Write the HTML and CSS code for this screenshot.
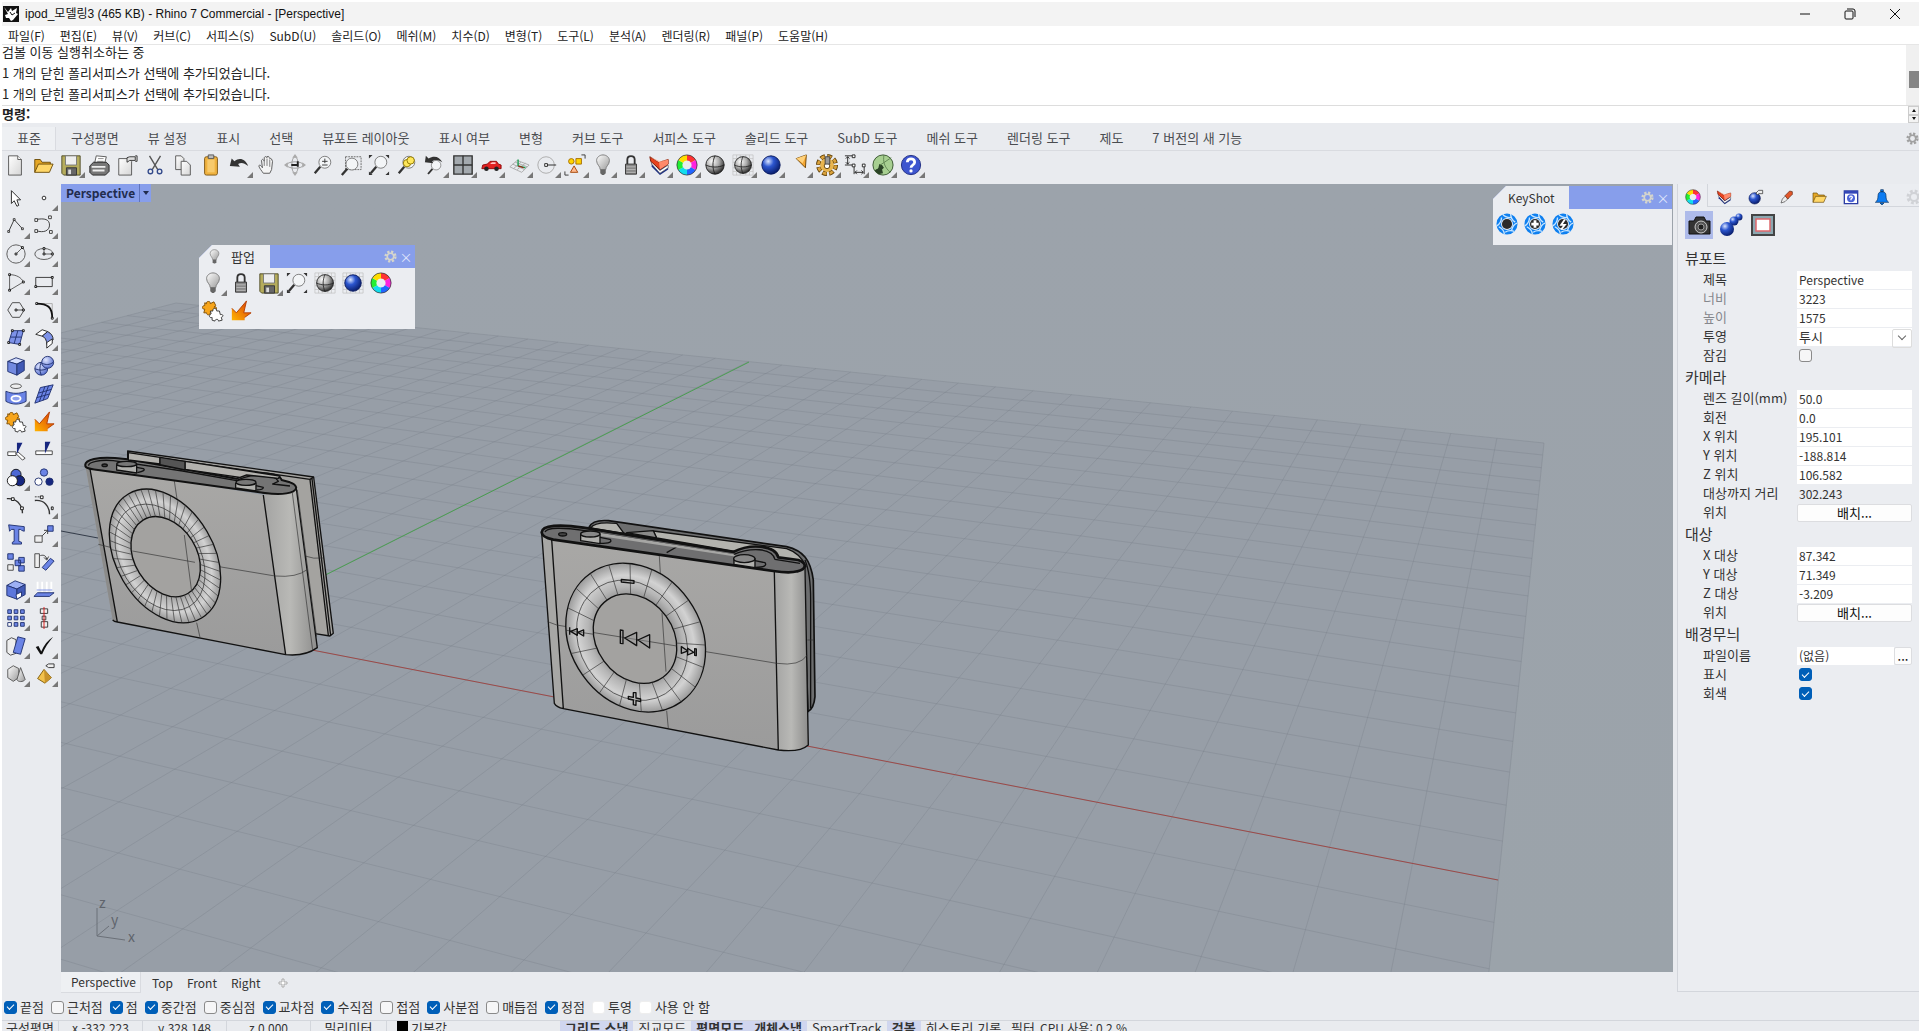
FILE: index.html
```html
<!DOCTYPE html>
<html lang="ko">
<head>
    <meta charset="utf-8">
    <title>ipod_모델링3 (465 KB) - Rhino 7 Commercial - [Perspective]</title>
    <link rel="stylesheet" href="styles.css">
</head>
<body>
    <!-- icon sprite -->
    <svg class="sprite" aria-hidden="true">
        <defs>
            <radialGradient id="g-grey" cx=".35" cy=".3" r=".75"><stop offset="0" stop-color="#fff"/><stop offset=".5" stop-color="#aaa"/><stop offset="1" stop-color="#222"/></radialGradient>
            <radialGradient id="g-blue" cx=".35" cy=".3" r=".75"><stop offset="0" stop-color="#dbe6ff"/><stop offset=".4" stop-color="#2c56cf"/><stop offset="1" stop-color="#071a66"/></radialGradient>
            <radialGradient id="g-soft" cx=".35" cy=".3" r=".8"><stop offset="0" stop-color="#dfe6ff"/><stop offset="1" stop-color="#4a64cc"/></radialGradient>
            <linearGradient id="g-steel" x1="0" y1="0" x2="1" y2="1"><stop offset="0" stop-color="#fff"/><stop offset="1" stop-color="#9b9b9b"/></linearGradient>
            <linearGradient id="g-paper" x1="0" y1="0" x2="1" y2="1"><stop offset="0" stop-color="#fff"/><stop offset="1" stop-color="#d5d5d5"/></linearGradient>
            <linearGradient id="g-fire" x1="0" y1="1" x2="1" y2="0"><stop offset="0" stop-color="#ffb400"/><stop offset="1" stop-color="#d93a08"/></linearGradient>
            <linearGradient id="g-body" x1="0" y1="0" x2="0" y2="1"><stop offset="0" stop-color="#a9a8a6"/><stop offset="1" stop-color="#9b9b9b"/></linearGradient>
            <linearGradient id="g-side"><stop offset="0" stop-color="#a3a3a2"/><stop offset=".5" stop-color="#b9b9b6"/><stop offset="1" stop-color="#8d8d8c"/></linearGradient>
            <radialGradient id="g-ring"><stop offset=".55" stop-color="#8f8f8f"/><stop offset=".68" stop-color="#b5b5b5"/><stop offset=".84" stop-color="#d2d2d2"/><stop offset="1" stop-color="#9a9a9a"/></radialGradient>
            <linearGradient id="g-sky" x1="0" y1="0" x2="0" y2="1"><stop offset="0" stop-color="#9ca3ab"/><stop offset="1" stop-color="#9ba3aa"/></linearGradient>
        </defs>
        <symbol id="i-new" viewBox="0 0 24 24"><path d="M5 2h10l4 4v17H5z" fill="url(#g-paper)" stroke="#555"/><path d="M15 2v4h4" fill="#fff" stroke="#555"/></symbol>
        <symbol id="i-open" viewBox="0 0 24 24"><path d="M3 20V6h6l2 3h9v3" fill="#e5a726" stroke="#6b4c08"/><path d="M3 20L7 11h16l-4 9z" fill="#ffd768" stroke="#6b4c08"/></symbol>
        <symbol id="i-save" viewBox="0 0 24 24"><path d="M2 2h20v21H4l-2-2z" fill="#b5ac5c" stroke="#4d4a25"/><path d="M6 2h12v10H6z" fill="#eee" stroke="#777"/><path d="M7 15h11v8H7z" fill="#666" stroke="#333"/><path d="M9 17h3v5H9z" fill="#ddd"/></symbol>
        <symbol id="i-print" viewBox="0 0 24 24"><path d="M7 11L9 2l11 1-2 8z" fill="#fff" stroke="#555"/><path d="M11 5h6M10 8h7" stroke="#888"/><path d="M2 13l4-4h14l3 3v7l-4 4H5l-3-3z" fill="#777" stroke="#222"/><path d="M4 14h15M5 18h13" stroke="#eee" stroke-width="2"/></symbol>
        <symbol id="i-props" viewBox="0 0 24 24"><path d="M3 5h11l3 3v15H3z" fill="url(#g-paper)" stroke="#555"/><path d="M15 3h6v4h-6l-3 2V4zM21 2h2v6h-2" fill="#ddd" stroke="#333"/></symbol>
        <symbol id="i-cut" viewBox="0 0 24 24" fill="none"><path d="M6 2l9 15M18 2L9 17" stroke="#555" stroke-width="1.500"/><circle cx="7" cy="19" r="2.500" stroke="#334a8b" stroke-width="1.500"/><circle cx="17" cy="19" r="2.500" stroke="#334a8b" stroke-width="1.500"/></symbol>
        <symbol id="i-copy" viewBox="0 0 24 24" fill="url(#g-paper)" stroke="#555"><path d="M4 2h6l3 3v12H4z"/><path d="M10 8h6l4 4v11H10z"/></symbol>
        <symbol id="i-paste" viewBox="0 0 24 24"><rect x="5" y="3" width="14" height="20" rx="2" fill="#efb23f" stroke="#7d5511"/><path d="M8 6h8v14H8z" fill="#f7ca6c"/><path d="M9 1h6v4H9z" fill="#bbb" stroke="#555"/></symbol>
        <symbol id="i-undo" viewBox="0 0 24 24"><path d="M2 13l2-8 3 3c6-5 12-2 15 5-5-4-8-4-11-2l2 3z" fill="#333"/></symbol>
        <symbol id="i-hand" viewBox="0 0 24 24"><path d="M8 21c-2-3-4-5-5-8 1-2 3 0 4 2L6 7c1-2 2-1 3 1l0-4c1-2 2-1 3 0l0-1c2-1 2 0 3 2 2-1 2 1 3 3l-1 9-2 4z" fill="#f4f4f4" stroke="#555"/><path d="M9 8v5M12 5v8M15 6v8" stroke="#777"/></symbol>
        <symbol id="i-orbit" viewBox="0 0 24 24" fill="none" stroke="#999"><ellipse cx="12" cy="12" rx="9" ry="3.500"/><ellipse cx="12" cy="12" rx="3.500" ry="9"/><path d="M12 0l3 4H9zM24 12l-4 3V9zM12 24l-3-4h6zM0 12l4-3v6z" fill="#aaa" stroke="none"/><path d="M8 12h8M15 8v6" stroke="#222" stroke-width="2"/></symbol>
        <symbol id="i-zoom" viewBox="0 0 24 24"><path d="M9 14L3 21" stroke="#333" stroke-width="2.500"/><circle cx="14" cy="9" r="6.500" fill="#f3f5f7" stroke="#777"/></symbol>
        <symbol id="i-zoomdyn" viewBox="0 0 24 24"><use href="#i-zoom"/><path d="M14 5v5M11 8h6M11 12h6" stroke="#333"/></symbol>
        <symbol id="i-zoomwin" viewBox="0 0 24 24"><path d="M6 3h17v14H6z" fill="none" stroke="#666" stroke-dasharray="2 1"/><g transform="translate(-1 2)"><use href="#i-zoom" width="24" height="24"/></g></symbol>
        <symbol id="i-zoomext" viewBox="0 0 24 24"><use href="#i-zoom"/><path d="M1 5V1h4zM23 5V1h-4zM1 19v4h4zM23 19v4h-4z" fill="#333"/></symbol>
        <symbol id="i-zoomsel" viewBox="0 0 24 24"><use href="#i-zoom"/><circle cx="12" cy="10" r="4" fill="#ffe75b" stroke="#8c7500"/><circle cx="16" cy="7" r="4" fill="#ffe75b" stroke="#8c7500"/></symbol>
        <symbol id="i-zoomundo" viewBox="0 0 24 24"><g transform="translate(2 5) scale(.8)"><use href="#i-zoom" width="24" height="24"/></g><path d="M1 9l1-7 3 3c6-4 12-2 15 4-5-3-8-3-11-1l1 2z" fill="#333"/></symbol>
        <symbol id="i-4view" viewBox="0 0 24 24"><path d="M2 2h20v20H2z" fill="#a3a9ae" stroke="#333" stroke-width="1.500"/><path d="M12 2v20M2 12h20" stroke="#333" stroke-width="1.500"/></symbol>
        <symbol id="i-car" viewBox="0 0 24 24"><path d="M2 16l1-4 5-1 3-3h7l2 3 3 1v4z" fill="#e32222" stroke="#8e0909"/><path d="M11 11l2-2h4v2z" fill="#ffc4c4"/><circle cx="7" cy="16" r="2.500" fill="#222"/><circle cx="18" cy="16" r="2.500" fill="#222"/></symbol>
        <symbol id="i-cplane" viewBox="0 0 24 24" fill="none"><path d="M2 14l8-7 13 5-8 8zM5 11l13 6M8 9l13 5M6 16l8-7M10 17l9-7" stroke="#aaa"/><path d="M11 13V6M11 13l8 2" stroke="#1a9c50" stroke-width="1.500"/><path d="M11 13l6 2" stroke="#c00"/></symbol>
        <symbol id="i-radius" viewBox="0 0 24 24" fill="none"><circle cx="11" cy="12" r="9" stroke="#aaa"/><path d="M11 12h11" stroke="#222"/><path d="M9.500 10.500h3v3h-3z" fill="#fff" stroke="#222"/></symbol>
        <symbol id="i-shapes" viewBox="0 0 24 24"><circle cx="8" cy="8" r="3" fill="#ffd400" stroke="#a46b00"/><path d="M13 5h6v6h-6z" fill="#ffd400" stroke="#a46b00"/><path d="M11 13l4 7H7z" fill="#ffb98f" stroke="#a34100"/><path d="M19 1h4v4M1 19v4h4" fill="none" stroke="#333"/></symbol>
        <symbol id="i-bulb" viewBox="0 0 24 24"><path d="M9 17c0-4-4-5-4-10 0-3 3-6 7-6s7 3 7 6c0 5-4 6-4 10z" fill="url(#g-steel)" stroke="#777"/><path d="M9 17h6v4l-2 2h-2l-2-2z" fill="#666"/></symbol>
        <symbol id="i-lock" viewBox="0 0 24 24"><path d="M8 11V6c0-5 8-5 8 0v5" fill="none" stroke="#333" stroke-width="2"/><path d="M6 11h12v11H6z" fill="#888" stroke="#333"/><path d="M7 14h10M7 17h10M7 20h10" stroke="#bbb"/></symbol>
        <symbol id="i-layers" viewBox="0 0 24 24"><path d="M4 9v5l9 9 9-6v-4z" fill="#1b2f85"/><path d="M3 7l10 11 9-6v3l-9 6L4 11z" fill="#fff" stroke="#555" stroke-width=".7"/><path d="M2 3l10 6 10-3v5l-9 6L3 8z" fill="#e8431f" stroke="#7c1a05"/><path d="M2 3l10 6 10-3-9 2z" fill="#ffc0a8"/><path d="M12 9l10-3v5l-9 6z" fill="#ff8a6a"/></symbol>
        <symbol id="i-cube" viewBox="0 0 24 24" stroke="#20306e"><path d="M3 7l9-4 9 3-8 4z" fill="#d7e0ff"/><path d="M3 7l10 3v12L3 18z" fill="#7289e0"/><path d="M13 10l8-4v11l-8 5z" fill="#4159b5"/></symbol>
        <symbol id="i-sphere" viewBox="0 0 24 24"><circle cx="12" cy="12" r="10" fill="url(#g-grey)" stroke="#222"/><path d="M2 12c6 3 14 3 20 0M12 2c-3 6-3 14 0 20" fill="none" stroke="#222"/></symbol>
        <symbol id="i-spheregrid" viewBox="0 0 24 24"><path d="M1 1h22v22H1zM5 1v22M9 1v22M15 1v22M19 1v22M1 5h22M1 9h22M1 15h22M1 19h22" stroke="#bbb" fill="none" stroke-width=".7"/><g transform="translate(1 1) scale(.92)"><use href="#i-sphere" width="24" height="24"/></g></symbol>
        <symbol id="i-ball" viewBox="0 0 24 24"><circle cx="12" cy="12" r="10" fill="url(#g-blue)" stroke="#0b1b5e"/></symbol>
        <symbol id="i-ballgrid" viewBox="0 0 24 24"><path d="M1 1h22v22H1zM5 1v22M9 1v22M15 1v22M19 1v22M1 5h22M1 9h22M1 15h22M1 19h22" stroke="#bbb" fill="none" stroke-width=".7"/><circle cx="12" cy="12" r="9" fill="url(#g-blue)" stroke="#0b1b5e"/></symbol>
        <symbol id="i-cone" viewBox="0 0 24 24"><path d="M9 5L20 1l-1 14z" fill="#f4a733" stroke="#6f4300"/><path d="M9 5l11-4-4 9z" fill="#ffd17a"/></symbol>
        <symbol id="i-gear" viewBox="0 0 24 24"><circle cx="12" cy="12" r="9.500" fill="none" stroke="#5d3d05" stroke-width="5" stroke-dasharray="5 2.460"/><circle cx="12" cy="12" r="9.500" fill="none" stroke="#dba33c" stroke-width="3" stroke-dasharray="4 3.460" stroke-dashoffset="-.5"/><circle cx="12" cy="12" r="7.500" fill="#e9b54e"/><circle cx="12" cy="13" r="3" fill="#fff" stroke="#5d3d05"/><path d="M10 3h5v8h-5z" fill="#999" stroke="#444"/></symbol>
        <symbol id="i-dim" viewBox="0 0 24 24" fill="none" stroke="#222"><path d="M1 2h8M1 12h8M4 3v8M2 5l2-2 2 2M2 9l2 2 2-2M11 14v8M22 14v8M12 20h9M14 18l-2 2 2 2M19 18l2 2-2 2"/><path d="M9 1h3v3H9zM9 11h3v3H9zM20 11h3v3h-3z" fill="#fff"/></symbol>
        <symbol id="i-globe" viewBox="0 0 24 24"><circle cx="12" cy="12" r="11" fill="#a7cf91" stroke="#32512a"/><path d="M3 18c2-2 3-1 4-3l1-4 3 1 2 3-2 2 1 4-5 1z" fill="#2b4427"/><path d="M9 12L21 4M13 1c-1 7 0 13 7 19" fill="none" stroke="#5f8452"/></symbol>
        <symbol id="i-help" viewBox="0 0 24 24"><circle cx="12" cy="12" r="10.500" fill="#3d55cf" stroke="#1b2a80"/><path d="M8 9c0-5 8-5 8 0 0 3-4 3-4 6" fill="none" stroke="#fff" stroke-width="3"/><circle cx="12" cy="18.500" r="1.800" fill="#fff"/></symbol>
        <symbol id="i-wheel" viewBox="0 0 24 24" fill="none" stroke-width="6"><path d="M12 4a8 8 0 0 1 6.900 4" stroke="#f33"/><path d="M18.900 8a8 8 0 0 1 0 8" stroke="#f2d"/><path d="M18.900 16a8 8 0 0 1-6.900 4" stroke="#26f"/><path d="M12 20a8 8 0 0 1-6.900-4" stroke="#1de"/><path d="M5.100 16a8 8 0 0 1 0-8" stroke="#2e3"/><path d="M5.100 8A8 8 0 0 1 12 4" stroke="#fd0"/><circle cx="12" cy="12" r="11" stroke="#333" stroke-width=".8"/></symbol>
        <symbol id="i-pointer" viewBox="0 0 24 24"><path d="M7 4v14l3-3 3 6 2-1-2-6h4z" fill="#fff" stroke="#222"/></symbol>
        <symbol id="i-point" viewBox="0 0 24 24"><circle cx="12" cy="12" r="2" fill="#fff" stroke="#222"/></symbol>
        <symbol id="i-polyline" viewBox="0 0 24 24" fill="#fff" stroke="#333"><path d="M4 18l6-13 9 10" fill="none"/><path d="M3 17h2v2H3zM9 4h2v2H9zM18 14h2v2h-2z"/></symbol>
        <symbol id="i-curve" viewBox="0 0 24 24" fill="#fff" stroke="#333"><path d="M3 5c10-2 15 0 15 6s-6 9-15 6" fill="none"/><path d="M2 4h3v3H2zM17 1h3v3h-3zM2 16h3v3H2zM18 17h3v3h-3z"/></symbol>
        <symbol id="i-circle" viewBox="0 0 24 24" fill="none" stroke="#555"><circle cx="12" cy="12" r="10"/><path d="M12 12l7-7"/><path d="M11 11h2v2h-2zM18 4h2v2h-2z" fill="#fff" stroke="#111"/></symbol>
        <symbol id="i-ellipse" viewBox="0 0 24 24" fill="none" stroke="#555"><ellipse cx="12" cy="12" rx="10" ry="6"/><path d="M12 12h9M12 12V6"/><path d="M11 11h2v2h-2zM20 11h2v2h-2zM11 5h2v2h-2z" fill="#fff" stroke="#111"/></symbol>
        <symbol id="i-arc" viewBox="0 0 24 24" fill="none" stroke="#555"><path d="M5 4c7 0 13 3 15 8L5 21z"/><path d="M4 3h2v2H4zM4 20h2v2H4zM19 11h2v2h-2z" fill="#fff" stroke="#111"/></symbol>
        <symbol id="i-rect" viewBox="0 0 24 24" fill="none" stroke="#333"><path d="M3 7h18v10H3z"/><path d="M2 16h2v2H2zM20 6h2v2h-2z" fill="#fff" stroke="#111"/></symbol>
        <symbol id="i-polygon" viewBox="0 0 24 24" fill="none" stroke="#444"><path d="M8 4h8l5 8-5 8H8l-5-8zM12 12h8"/><path d="M11 11h2v2h-2zM19 11h2v2h-2z" fill="#fff" stroke="#111"/></symbol>
        <symbol id="i-fillet" viewBox="0 0 24 24" fill="none"><path d="M4 5h17v15" stroke="#aaa"/><path d="M4 5c12 0 17 4 17 16" stroke="#111" stroke-width="2"/><path d="M3 4h2v2H3zM20 20h2v2h-2z" fill="#fff" stroke="#111"/></symbol>
        <symbol id="i-surf" viewBox="0 0 24 24"><path d="M8 4h12l-4 15-12-2z" fill="#7d92e8" stroke="#20306e"/><path d="M14 4l-4 14M6 11h12" stroke="#20306e"/><path d="M7 3h2v2H7zM19 3h2v2h-2zM3 16h2v2H3zM15 18h2v2h-2z" fill="#fff" stroke="#111"/></symbol>
        <symbol id="i-filletsurf" viewBox="0 0 24 24" stroke="#222"><path d="M3 8l7-5 6 2-6 5z" fill="#fff"/><path d="M10 10l6-5c4 2 6 5 6 9l-7 5c0-5-2-8-5-9z" fill="#7d92e8"/><path d="M15 17l6-4v5l-6 5z" fill="#fff"/></symbol>
        <symbol id="i-balls" viewBox="0 0 24 24" stroke="#20306e" fill="url(#g-soft)"><circle cx="9" cy="15" r="7"/><circle cx="16" cy="8" r="6.500"/><path d="M9 8c-2 5-2 9 0 14M2 15c5 2 9 2 13 0M10 9c4 2 8 2 12-1" fill="none"/></symbol>
        <symbol id="i-hole" viewBox="0 0 24 24"><ellipse cx="12" cy="3.500" rx="6" ry="2.500" fill="#eee" stroke="#555"/><path d="M1 9c7 3 15 3 22 0v11c-7 4-15 4-22 0z" fill="#6b84e6" stroke="#20306e"/><ellipse cx="12" cy="17" rx="5" ry="3" fill="#8da0ec" stroke="#fff" stroke-width="2"/></symbol>
        <symbol id="i-patch" viewBox="0 0 24 24"><path d="M8 5l14-3-6 15-14 5z" fill="#6b84e6" stroke="#20306e"/><path d="M13 4L7 20M17 3l-6 16M6 11l14-4M4 16l14-4" stroke="#20306e"/></symbol>
        <symbol id="i-puzzle" viewBox="0 0 24 24"><path d="M5 4c-1-3 4-3 4-1l0 1 4-2 2 4-2 2c2-2 4 1 2 3l-2 0 0 4-4-1c0 3-4 3-4 0l-3 0 1-4c-4 0-3-4 0-4l0-3z" fill="#f7a51b" stroke="#7c4b00"/><path d="M12 12c-1-3 3-4 4-1l0 1 3 0 1 4c3-1 4 2 1 3l1 3-4 1c0-3-4-2-4 0l-3-1 0-3c-3 1-4-2-1-4l-1-3z" fill="#fff" stroke="#333"/></symbol>
        <symbol id="i-explode" viewBox="0 0 24 24"><path d="M2 22V9l5 5L18 1l-3 13 8 0-7 5v3z" fill="url(#g-fire)"/><path d="M2 9l5 5L18 1l-3 13h8l-7 5" fill="none" stroke="#b33d00"/></symbol>
        <symbol id="i-trim" viewBox="0 0 24 24"><path d="M3 14h9v4H3zM14 14l8 7-3 2-7-7z" fill="#fff" stroke="#444"/><path d="M13 4h6l-6 12z" fill="#16267f"/></symbol>
        <symbol id="i-split" viewBox="0 0 24 24"><path d="M3 13h18v4H3z" fill="#fff" stroke="#444"/><path d="M13 3h6l-6 13z" fill="#16267f"/></symbol>
        <symbol id="i-union" viewBox="0 0 24 24" stroke="#111"><circle cx="12" cy="8" r="5.500" fill="#4d68d6"/><circle cx="16" cy="15" r="5.500" fill="#16267f"/><circle cx="8" cy="15" r="5.500" fill="#fff"/></symbol>
        <symbol id="i-dots" viewBox="0 0 24 24" stroke="#20306e"><circle cx="12" cy="6" r="4" fill="#6b84e6"/><circle cx="6" cy="16" r="4" fill="#fff"/><circle cx="18" cy="16" r="4" fill="#16267f"/></symbol>
        <symbol id="i-blend" viewBox="0 0 24 24" fill="none"><path d="M2 4c10-1 17 6 17 16" stroke="#333" stroke-width="1.500"/><path d="M7 3h3v3H7zM17 13h3v3h-3z" fill="#fff" stroke="#111"/></symbol>
        <symbol id="i-blend2" viewBox="0 0 24 24" fill="none"><path d="M2 6c10-1 16 6 16 15" stroke="#333" stroke-width="1.500"/><path d="M2 2h8" stroke="#333" stroke-dasharray="2 1"/><path d="M8 1h3v3H8zM20 13h2v3h-2z" fill="#fff" stroke="#111"/></symbol>
        <symbol id="i-solid-t" viewBox="0 0 24 24"><path d="M4 2l17 2v5l-3-1-1-1h-2v13l3 1v2H8v-2l2-1V7H7L5 9z" fill="#6b84e6" stroke="#20306e"/></symbol>
        <symbol id="i-move" viewBox="0 0 24 24"><path d="M2 14h8v7H2z" fill="#eee" stroke="#444"/><path d="M16 3h6v6h-6z" fill="#6b84e6" stroke="#20306e"/><path d="M10 14l5-5M12 8h4v4" fill="none" stroke="#333"/></symbol>
        <symbol id="i-group" viewBox="0 0 24 24" fill="#6b84e6" stroke="#20306e"><path d="M3 3h6v6H3zM15 7h6v6h-6zM11 10h6v6h-6zM15 16h6v6h-6z"/><path d="M3 15h6v6H3z" fill="#eee" stroke="#444"/></symbol>
        <symbol id="i-rotate" viewBox="0 0 24 24"><path d="M2 3h5v15H2z" fill="#eee" stroke="#444"/><path d="M10 18L19 8l4 3-9 10z" fill="#6b84e6" stroke="#20306e"/><path d="M8 5c4-1 6 0 7 4M12 7l3 3 2-4" fill="none" stroke="#333"/></symbol>
        <symbol id="i-boss" viewBox="0 0 24 24" stroke="#20306e"><path d="M2 7l9-5 11 4-9 5z" fill="#9db0f5"/><path d="M2 7l11 4v11L2 18z" fill="#5d77dc"/><path d="M13 11l9-5v11l-9 5z" fill="#4159b5"/><path d="M12 17l6-3v5l-5 3z" fill="#fff"/></symbol>
        <symbol id="i-project" viewBox="0 0 24 24"><path d="M1 19l4-4h18l-5 4z" fill="#6b84e6" stroke="#20306e"/><path d="M5 3v11M10 3v11M15 3v11M20 3v11" stroke="#fff" stroke-width="2"/><path d="M4 12h17" stroke="#7d92e8"/></symbol>
        <symbol id="i-array" viewBox="0 0 24 24" fill="#6b84e6" stroke="#20306e"><path d="M3 3h4v4H3zM10 3h4v4h-4zM17 3h4v4h-4zM3 10h4v4H3zM10 10h4v4h-4zM17 10h4v4h-4zM10 17h4v4h-4zM17 17h4v4h-4z"/><path d="M3 17h4v4H3z" fill="#fff"/></symbol>
        <symbol id="i-align" viewBox="0 0 24 24" fill="#eee" stroke="#333"><path d="M8 2h8v5H8zM10 10h4v4h-4zM9 16h7v6H9z"/><path d="M12 0v24" stroke="#d11"/></symbol>
        <symbol id="i-book" viewBox="0 0 24 24"><path d="M2 6l5-3 5 2v15l-6 2-4-3z" fill="#eee" stroke="#444"/><path d="M14 2l8 2-5 17-8-2z" fill="#6b84e6" stroke="#20306e"/></symbol>
        <symbol id="i-check" viewBox="0 0 24 24"><path d="M3 13l3-1 3 6C12 11 16 6 22 2 17 8 13 14 10 21H8z" fill="#111"/></symbol>
        <symbol id="i-cluster" viewBox="0 0 24 24" fill="url(#g-steel)" stroke="#555"><path d="M3 7l6-4 6 3v10l-6 4-6-4z"/><path d="M17 5l5 13c-2 3-8 3-9 0z"/></symbol>
        <symbol id="i-pyramid" viewBox="0 0 24 24"><path d="M12 7l8 9-7 6-8-5z" fill="#f2c14b" stroke="#7c5a0a"/><path d="M12 7l8 9-7 6z" fill="#c8932a"/><path d="M14 3l3-2h6v4h-6z" fill="#eee" stroke="#333"/></symbol>
        <symbol id="i-cog" viewBox="0 0 16 16" fill="none" stroke="currentColor"><circle cx="8" cy="8" r="6" stroke-width="3" stroke-dasharray="2.700 2.010"/><circle cx="8" cy="8" r="4" stroke-width="2"/></symbol>
        <symbol id="i-material" viewBox="0 0 24 24"><circle cx="10" cy="14" r="8.500" fill="url(#g-blue)" stroke="#0b1b5e"/><path d="M12 6l4-4h6v5h-6l-2 2z" fill="#eee" stroke="#222"/></symbol>
        <symbol id="i-brush" viewBox="0 0 24 24"><path d="M3 21l2-6 5-5 4 4-5 5z" fill="#eee" stroke="#444"/><path d="M9 10l7-7 4 1v4l-7 7z" fill="#e2572b" stroke="#5e2411"/></symbol>
        <symbol id="i-helpwin" viewBox="0 0 24 24"><path d="M2 3h20v19H2z" fill="#fff" stroke="#2c3ea4" stroke-width="2"/><path d="M2 3h20v4H2z" fill="#3447b8"/><circle cx="12" cy="14" r="6" fill="#4a62d8"/><path d="M10 13c0-3 4-3 4 0l-2 2v2" fill="none" stroke="#fff" stroke-width="2"/></symbol>
        <symbol id="i-bell" viewBox="0 0 24 24"><path d="M2 20c3-2 4-5 4-10 0-4 2-6 6-6s6 2 6 6c0 5 1 8 4 10zM10 1h4v3h-4zM9 21h6l-3 3z" fill="#0d7cf2" stroke="#06305f"/></symbol>
        <symbol id="i-camera" viewBox="0 0 24 24"><path d="M2 8h5l2-4h8l2 4h4v13H2z" fill="#333" stroke="#111"/><circle cx="14" cy="14" r="6" fill="#555" stroke="#ccc"/><circle cx="14" cy="14" r="3" fill="#222" stroke="#999"/></symbol>
        <symbol id="i-ballchain" viewBox="0 0 24 24" fill="url(#g-blue)"><circle cx="20" cy="4" r="3.500"/><circle cx="15" cy="8" r="4.500"/><circle cx="8" cy="16" r="7"/></symbol>
        <symbol id="i-frame" viewBox="0 0 24 24"><path d="M1 2h22v20H1z" fill="#8ca7b0" stroke="#444" stroke-width="2"/><path d="M5 6h14v12H5z" fill="#fff" stroke="#e0686c" stroke-width="1.500"/></symbol>
        <symbol id="i-shutter" viewBox="0 0 24 24" fill="none"><circle cx="12" cy="12" r="9" stroke="#0f80f0" stroke-width="5"/><path d="M7 1c2 3 5 4 9 4M16 1c0 4 2 7 5 9M23 11c-4 1-5 4-6 8M20 20c-3-1-7-1-10 1M9 23c0-4-2-6-6-8M1 14c3-2 5-5 5-9" stroke="#c9e6ff" stroke-width="1.500"/><circle cx="12" cy="12" r="5.500" fill="#2b2b2b"/></symbol>
    </svg>

    <header class="titlebar">
        <svg class="app-icon" viewBox="0 0 16 16"><path d="M0 0h16v16H0z" fill="#111"/><path d="M1 1l4 5 3-4 1 3 5-3-1 5 2 1-5 6-2 1-2-3-3 0-1-3 3-1z" fill="#fff"/><path d="M7 6l2 3 3-2" fill="none" stroke="#111"/></svg>
        <h1>ipod_모델링3 (465 KB) - Rhino 7 Commercial - [Perspective]</h1>
        <div class="window-buttons">
            <button><svg viewBox="0 0 12 12"><path d="M1 6h10"/></svg></button>
            <button><svg viewBox="0 0 12 12"><rect x="1" y="3" width="8" height="8" rx="1"/><path d="M3 1h6a2 2 0 0 1 2 2v6"/></svg></button>
            <button><svg viewBox="0 0 12 12"><path d="M1 1l10 10M11 1L1 11"/></svg></button>
        </div>
    </header>

    <nav class="menubar">
        <button>파일(F)</button>
        <button>편집(E)</button>
        <button>뷰(V)</button>
        <button>커브(C)</button>
        <button>서피스(S)</button>
        <button>SubD(U)</button>
        <button>솔리드(O)</button>
        <button>메쉬(M)</button>
        <button>치수(D)</button>
        <button>변형(T)</button>
        <button>도구(L)</button>
        <button>분석(A)</button>
        <button>렌더링(R)</button>
        <button>패널(P)</button>
        <button>도움말(H)</button>
    </nav>

    <section class="history">
        <div class="history-text">
            <p>검볼 이동 실행취소하는 중</p>
            <p>1 개의 닫힌 폴리서피스가 선택에 추가되었습니다.</p>
            <p>1 개의 닫힌 폴리서피스가 선택에 추가되었습니다.</p>
        </div>
        <div class="scrollbar"><div class="thumb"></div></div>
    </section>
    <div class="prompt">
        <label for="command">명령:</label>
        <input type="text" id="command">
        <div class="spinner"><button class="up"></button><button class="down"></button></div>
    </div>

    <nav class="toolbar-tabs">
        <button class="active">표준</button>
        <button>구성평면</button>
        <button>뷰 설정</button>
        <button>표시</button>
        <button>선택</button>
        <button>뷰포트 레이아웃</button>
        <button>표시 여부</button>
        <button>변형</button>
        <button>커브 도구</button>
        <button>서피스 도구</button>
        <button>솔리드 도구</button>
        <button>SubD 도구</button>
        <button>메쉬 도구</button>
        <button>렌더링 도구</button>
        <button>제도</button>
        <button>7 버전의 새 기능</button>
        <svg class="cog"><use href="#i-cog"/></svg>
    </nav>

    <div class="toolbar main-tools">
        <button><svg><use href="#i-new"/></svg></button>
        <button><svg><use href="#i-open"/></svg></button>
        <button class="more"><svg><use href="#i-save"/></svg></button>
        <button><svg><use href="#i-print"/></svg></button>
        <button><svg><use href="#i-props"/></svg></button>
        <button><svg><use href="#i-cut"/></svg></button>
        <button><svg><use href="#i-copy"/></svg></button>
        <button><svg><use href="#i-paste"/></svg></button>
        <button class="more"><svg><use href="#i-undo"/></svg></button>
        <button><svg><use href="#i-hand"/></svg></button>
        <button><svg><use href="#i-orbit"/></svg></button>
        <button><svg><use href="#i-zoomdyn"/></svg></button>
        <button><svg><use href="#i-zoomwin"/></svg></button>
        <button><svg><use href="#i-zoomext"/></svg></button>
        <button><svg><use href="#i-zoomsel"/></svg></button>
        <button class="more"><svg><use href="#i-zoomundo"/></svg></button>
        <button class="more"><svg><use href="#i-4view"/></svg></button>
        <button class="more"><svg><use href="#i-car"/></svg></button>
        <button class="more"><svg><use href="#i-cplane"/></svg></button>
        <button class="more"><svg><use href="#i-radius"/></svg></button>
        <button class="more"><svg><use href="#i-shapes"/></svg></button>
        <button class="more"><svg><use href="#i-bulb"/></svg></button>
        <button class="more"><svg><use href="#i-lock"/></svg></button>
        <button class="more"><svg><use href="#i-layers"/></svg></button>
        <button class="more"><svg><use href="#i-wheel"/></svg></button>
        <button><svg><use href="#i-sphere"/></svg></button>
        <button class="more"><svg><use href="#i-spheregrid"/></svg></button>
        <button class="more"><svg><use href="#i-ball"/></svg></button>
        <button class="more"><svg><use href="#i-cone"/></svg></button>
        <button class="more"><svg><use href="#i-gear"/></svg></button>
        <button class="more"><svg><use href="#i-dim"/></svg></button>
        <button class="more"><svg><use href="#i-globe"/></svg></button>
        <button class="more"><svg><use href="#i-help"/></svg></button>
    </div>

    <div class="workspace">
        <div class="toolbar side-tools">
            <button><svg><use href="#i-pointer"/></svg></button>
            <button class="more"><svg><use href="#i-point"/></svg></button>
            <button class="more"><svg><use href="#i-polyline"/></svg></button>
            <button class="more"><svg><use href="#i-curve"/></svg></button>
            <button class="more"><svg><use href="#i-circle"/></svg></button>
            <button class="more"><svg><use href="#i-ellipse"/></svg></button>
            <button class="more"><svg><use href="#i-arc"/></svg></button>
            <button class="more"><svg><use href="#i-rect"/></svg></button>
            <button class="more"><svg><use href="#i-polygon"/></svg></button>
            <button class="more"><svg><use href="#i-fillet"/></svg></button>
            <button class="more"><svg><use href="#i-surf"/></svg></button>
            <button class="more"><svg><use href="#i-filletsurf"/></svg></button>
            <button class="more"><svg><use href="#i-cube"/></svg></button>
            <button class="more"><svg><use href="#i-balls"/></svg></button>
            <button class="more"><svg><use href="#i-hole"/></svg></button>
            <button class="more"><svg><use href="#i-patch"/></svg></button>
            <button><svg><use href="#i-puzzle"/></svg></button>
            <button><svg><use href="#i-explode"/></svg></button>
            <button><svg><use href="#i-trim"/></svg></button>
            <button><svg><use href="#i-split"/></svg></button>
            <button class="more"><svg><use href="#i-union"/></svg></button>
            <button><svg><use href="#i-dots"/></svg></button>
            <button><svg><use href="#i-blend"/></svg></button>
            <button class="more"><svg><use href="#i-blend2"/></svg></button>
            <button><svg><use href="#i-solid-t"/></svg></button>
            <button class="more"><svg><use href="#i-move"/></svg></button>
            <button><svg><use href="#i-group"/></svg></button>
            <button><svg><use href="#i-rotate"/></svg></button>
            <button class="more"><svg><use href="#i-boss"/></svg></button>
            <button class="more"><svg><use href="#i-project"/></svg></button>
            <button class="more"><svg><use href="#i-array"/></svg></button>
            <button class="more"><svg><use href="#i-align"/></svg></button>
            <button class="more"><svg><use href="#i-book"/></svg></button>
            <button class="more"><svg><use href="#i-check"/></svg></button>
            <button class="more"><svg><use href="#i-cluster"/></svg></button>
            <button class="more"><svg><use href="#i-pyramid"/></svg></button>
        </div>

        <main class="views">
            <div class="viewport">
                <svg class="scene" viewBox="61 184 1612 788" preserveAspectRatio="xMinYMin slice">
                    <rect x="61" y="184" width="1612" height="788" fill="url(#g-sky)"/>
                    <path id="ground" fill="#7d8294" fill-opacity=".13"/>
                    <path id="grid" class="grid"/>
                    <path d="M214 631L749 362" stroke="#4a9e50" fill="none"/>
                    <path d="M214 631L1498 880" stroke="#9c4a48" fill="none"/>
                    <path d="M61 531L98 538" stroke="#333b48" fill="none"/>

                    <!-- first player -->
                    <g class="model" transform="translate(0 420) scale(.3333)">
                        <path d="M383 93L941 171 1000 640 990 648 940 640 880 240 383 120z" fill="#a4a3a0"/>
                        <path d="M383 100L930 178 985 645M941 171L930 178M936 176L992 646" fill="none"/>
                        <path d="M915 408Q940 418 970 414" class="thin"/>
                        <path d="M256 137L338 600Q342 606 352 606L857 704Q915 710 952 683L889 205 790 225z" fill="url(#g-body)" stroke="none"/>
                        <path d="M790 225L857 704Q915 710 952 683L889 205Q860 225 790 225z" fill="url(#g-side)" stroke="none"/>
                        <path d="M256 137L338 600 352 606 270 147z" fill="#8b8b8a" stroke="none"/>
                        <path d="M270 147L352 606L857 704Q915 710 952 683L889 205M790 225L857 704M338 600Q342 606 352 606" fill="none"/>
                        <path d="M877 218L938 690M892 210L950 650M295 373L335 383M395 393L585 427M657 440L825 468Q890 474 923 448M523 183L545 330 575 515M590 608L600 652" class="thin"/>
                        <path d="M256 137C252 118 300 110 345 114L383 118 545 146 710 176C745 152 838 155 845 180L870 187C892 195 893 207 880 214 860 223 830 224 795 219L300 151C270 147 256 145 256 137z" fill="#747474" stroke-width="6"/>
                        <path d="M266 137C264 126 300 118 340 122L548 153 710 182C750 160 825 160 835 184L818 192 870 198" fill="none"/>
                        <path d="M385 98L480 112V132L385 120zM555 124L840 168 835 175 740 165 720 172 555 148z" fill="#b3b2ae"/>
                        <path d="M480 112L555 124V150L480 134z" fill="#555"/>
                        <path d="M350 135V150L410 159V136zM707 190V204L768 213V190z" fill="#b0b0ad"/>
                        <ellipse cx="380" cy="132" rx="30" ry="8" fill="#777"/>
                        <ellipse cx="738" cy="187" rx="30" ry="9" fill="#777"/>
                        <ellipse cx="314" cy="136" rx="8" ry="4" fill="#444"/>
                        <path d="M410 142L430 146Q440 152 412 158M768 197L790 202Q790 210 770 210" fill="none"/>
                        <ellipse cx="495" cy="408" rx="216" ry="146" transform="rotate(59.4 495 408)" fill="url(#g-ring)"/>
                        <ellipse cx="480" cy="412" rx="172" ry="119" transform="rotate(59 480 412)" class="thin"/>
                        <ellipse cx="497" cy="410" rx="129" ry="93" transform="rotate(58.300 497 410)" fill="#a3a2a0"/>
                        <path d="M397 393L585 427M553 345L575 515" class="thin"/>
                        <path class="thin" data-spokes="46" data-outer="495 408 216 146 59.4" data-inner="497 410 129 93 58.3"/>
                    </g>

                    <!-- second player -->
                    <g class="model" transform="translate(520 500) scale(.3333)">
                        <path d="M207 82C215 65 240 60 265 62L800 140C850 152 872 180 880 240L885 590Q882 625 864 635L850 200 600 150z" fill="#6d6e6f" stroke-width="5"/>
                        <path d="M212 84C220 70 250 66 290 70L312 100zM400 93L800 146C835 158 850 180 858 200L775 180C770 145 680 135 650 155L410 114z" fill="#b3b3ae"/>
                        <path d="M320 98L400 92L410 114z" fill="#8a8a89"/>
                        <path d="M855 180Q872 220 872 300V625" fill="none"/>
                        <path d="M65 97L103 610Q110 622 130 626L775 750Q840 758 865 735L855 200 760 215z" fill="url(#g-body)" stroke="none"/>
                        <path d="M65 97L103 610Q110 622 130 626L95 118z" fill="#a7a7a5" stroke="none"/>
                        <path d="M763 215L775 750Q840 758 865 735L855 200Q820 220 763 215z" fill="url(#g-side)" stroke="none"/>
                        <path d="M65 97L103 610Q110 622 130 626L775 750Q840 758 865 735L855 200M95 118L130 626M763 215L775 750" fill="none"/>
                        <path d="M83 365Q110 378 140 380M557 455L770 490Q840 500 862 465M418 168L422 235M440 632L445 685M862 420H880" class="thin"/>
                        <path d="M65 97C66 75 120 72 190 83L640 156C690 130 765 135 775 172L835 180C862 190 860 208 832 214 810 220 780 216 760 213L100 119C75 114 65 108 65 97z" fill="#6f6f70" stroke-width="8"/>
                        <path d="M75 96C80 82 130 82 190 91L640 164C690 142 755 142 765 178L840 190M440 158L475 138" fill="none"/>
                        <path d="M240 98L640 162 650 170 240 108z" fill="#a6a6a4" stroke="none"/>
                        <path d="M182 102V122L240 131V102zM642 176V193L705 203V176z" fill="#b0b0ad"/>
                        <ellipse cx="211" cy="102" rx="29" ry="9" fill="#888"/>
                        <ellipse cx="673" cy="176" rx="32" ry="12" fill="#888"/>
                        <ellipse cx="128" cy="103" rx="12" ry="5" fill="#444"/>
                        <path d="M240 112L270 118Q282 130 240 130M705 182L735 188Q745 202 706 202" fill="none"/>
                        <ellipse cx="347" cy="413" rx="236" ry="195" transform="rotate(54.700 347 413)" fill="url(#g-ring)"/>
                        <ellipse cx="336" cy="421" rx="189" ry="157" transform="rotate(58 336 421)" class="thin"/>
                        <ellipse cx="345" cy="416" rx="143" ry="115" transform="rotate(54 345 416)" fill="#a3a2a0"/>
                        <path d="M222 398L470 438M426 338L438 515" class="thin"/>
                        <path class="thin" data-spokes="20" data-outer="347 413 236 195 54.7" data-inner="345 416 143 115 54"/>
                        <path d="M304 238L342 242V250L304 246zM340 578h8v16l14 3v8l-14-3v14l-8-2v-14l-15-3v-8l15 3zM301 390l8 1v40l-8-1zM350 397v40l-36-23zM389 404v40l-35-24zM149 382v22M172 386v20l-20-12zM191 390v18l-18-11zM484 440v20l20-7zM503 445v20l18-8zM524 446v20l5 1v-20z" fill="#999" fill-opacity=".4" stroke-width="4"/>
                    </g>

                    <g class="axes">
                        <path d="M97 908V936L125 940M97 936L109 926" fill="none"/>
                        <text x="99" y="908">z</text>
                        <text x="111" y="925">y</text>
                        <text x="128" y="942">x</text>
                    </g>
                </svg>

                <div class="view-title"><span>Perspective</span><button></button></div>

                <div class="float popup">
                    <div class="float-head">
                        <div class="float-tab"><svg><use href="#i-bulb"/></svg>팝업</div>
                        <svg class="cog"><use href="#i-cog"/></svg>
                        <button class="close">×</button>
                    </div>
                    <div class="toolbar">
                        <button class="more"><svg><use href="#i-bulb"/></svg></button>
                        <button><svg><use href="#i-lock"/></svg></button>
                        <button class="more"><svg><use href="#i-save"/></svg></button>
                        <button><svg><use href="#i-zoomext"/></svg></button>
                        <button><svg><use href="#i-spheregrid"/></svg></button>
                        <button><svg><use href="#i-ballgrid"/></svg></button>
                        <button><svg><use href="#i-wheel"/></svg></button>
                        <button><svg><use href="#i-puzzle"/></svg></button>
                        <button><svg><use href="#i-explode"/></svg></button>
                    </div>
                </div>

                <div class="float keyshot">
                    <div class="float-head">
                        <div class="float-tab">KeyShot</div>
                        <svg class="cog"><use href="#i-cog"/></svg>
                        <button class="close">×</button>
                    </div>
                    <div class="toolbar">
                        <button><svg><use href="#i-shutter"/></svg></button>
                        <button><svg viewBox="0 0 24 24"><use href="#i-shutter"/><path d="M12 8v8M8 12h8" stroke="#fff" stroke-width="3"/></svg></button>
                        <button><svg viewBox="0 0 24 24"><use href="#i-shutter"/><path d="M14 7l-4 6h4l-4 5" stroke="#fff" stroke-width="2" fill="none"/></svg></button>
                    </div>
                </div>
            </div>
            <nav class="view-tabs">
                <button class="active">Perspective</button>
                <button>Top</button>
                <button>Front</button>
                <button>Right</button>
                <button><svg viewBox="0 0 10 10"><path d="M4 1h2v3h3v2H6v3H4V6H1V4h3z" fill="#fff" stroke="#aaa"/></svg></button>
            </nav>
        </main>

        <aside class="panel">
            <nav class="panel-tabs">
                <button class="active"><svg><use href="#i-wheel"/></svg></button>
                <button><svg><use href="#i-layers"/></svg></button>
                <button><svg><use href="#i-material"/></svg></button>
                <button><svg><use href="#i-brush"/></svg></button>
                <button><svg><use href="#i-open"/></svg></button>
                <button><svg><use href="#i-helpwin"/></svg></button>
                <button><svg><use href="#i-bell"/></svg></button>
                <button class="faded"><svg><use href="#i-cog"/></svg></button>
            </nav>
            <div class="panel-kinds">
                <button class="active"><svg><use href="#i-camera"/></svg></button>
                <button><svg><use href="#i-ballchain"/></svg></button>
                <button><svg><use href="#i-frame"/></svg></button>
            </div>
            <form class="props">
                <h2>뷰포트</h2>
                <div class="row"><label for="title">제목</label><input type="text" id="title" value="Perspective"></div>
                <div class="row dim"><label for="width">너비</label><input type="text" id="width" value="3223"></div>
                <div class="row dim"><label for="height">높이</label><input type="text" id="height" value="1575"></div>
                <div class="row"><label for="projection">투영</label><div class="select"><select id="projection"><option>투시</option></select></div></div>
                <div class="row"><label for="locked">잠김</label><input type="checkbox" id="locked"></div>
                <h2>카메라</h2>
                <div class="row"><label for="lens">렌즈 길이(mm)</label><input type="text" id="lens" value="50.0"></div>
                <div class="row"><label for="roll">회전</label><input type="text" id="roll" value="0.0"></div>
                <div class="row"><label for="cx">X 위치</label><input type="text" id="cx" value="195.101"></div>
                <div class="row"><label for="cy">Y 위치</label><input type="text" id="cy" value="-188.814"></div>
                <div class="row"><label for="cz">Z 위치</label><input type="text" id="cz" value="106.582"></div>
                <div class="row"><label for="distance">대상까지 거리</label><input type="text" id="distance" class="plain" value="302.243" readonly></div>
                <div class="row"><label for="place-camera">위치</label><button type="button" id="place-camera">배치...</button></div>
                <h2>대상</h2>
                <div class="row"><label for="tx">X 대상</label><input type="text" id="tx" value="87.342"></div>
                <div class="row"><label for="ty">Y 대상</label><input type="text" id="ty" value="71.349"></div>
                <div class="row"><label for="tz">Z 대상</label><input type="text" id="tz" value="-3.209"></div>
                <div class="row"><label for="place-target">위치</label><button type="button" id="place-target">배치...</button></div>
                <h2>배경무늬</h2>
                <div class="row file"><label for="file">파일이름</label><input type="text" id="file" value="(없음)"><button type="button">...</button></div>
                <div class="row"><label for="show">표시</label><input type="checkbox" id="show" checked></div>
                <div class="row"><label for="gray">회색</label><input type="checkbox" id="gray" checked></div>
            </form>
        </aside>
    </div>

    <div class="osnap">
        <label><input type="checkbox" checked>끝점</label>
        <label><input type="checkbox">근처점</label>
        <label><input type="checkbox" checked>점</label>
        <label><input type="checkbox" checked>중간점</label>
        <label><input type="checkbox">중심점</label>
        <label><input type="checkbox" checked>교차점</label>
        <label><input type="checkbox" checked>수직점</label>
        <label><input type="checkbox">접점</label>
        <label><input type="checkbox" checked>사분점</label>
        <label><input type="checkbox">매듭점</label>
        <label><input type="checkbox" checked>정점</label>
        <label><input type="checkbox" class="blank">투영</label>
        <label><input type="checkbox" class="blank">사용 안 함</label>
    </div>

    <footer class="statusbar">
        <span class="cell plane">구성평면</span>
        <span class="cell coord">x -332.223</span>
        <span class="cell coord">y 328.148</span>
        <span class="cell coord">z 0.000</span>
        <span class="cell units">밀리미터</span>
        <span class="cell layer"><i></i>기본값</span>
        <button class="on">그리드 스냅</button>
        <button>직교모드</button>
        <button class="on">평면모드</button>
        <button class="on">개체스냅</button>
        <button>SmartTrack</button>
        <button class="on">검볼</button>
        <button>히스토리 기록</button>
        <button>필터</button>
        <span class="cpu">CPU 사용: 0.2 %</span>
    </footer>

    <script src="scene.js"></script>
</body>
</html>
```
FILE: styles.css
```css
* {
    box-sizing: border-box;
}
body {
    margin: 0;
    height: 100vh;
    display: flex;
    flex-direction: column;
    overflow: hidden;
    border: 2px solid #fff;
    background: #e9ebef;
    color: #333;
    font: 13px/18px "Noto Sans CJK KR", "Noto Sans", sans-serif;
}
button, input, select {
    margin: 0;
    padding: 0;
    border: 0;
    background: none;
    color: inherit;
    font: inherit;
}
h1, h2, p {
    margin: 0;
    font-weight: normal;
}
svg {
    display: block;
}
.sprite {
    position: absolute;
    width: 0;
    height: 0;
}

/* title and menu */
.titlebar {
    flex: none;
    display: flex;
    align-items: center;
    height: 24px;
    padding: 0 2px 0 1px;
    background: #f3f3f3;
    color: #111;
}
.titlebar h1 {
    flex: 1;
    margin-left: 6px;
    font-family: "Liberation Sans", "Noto Sans CJK KR", sans-serif;
    font-size: 12px;
}
.app-icon {
    width: 16px;
    height: 16px;
}
.window-buttons {
    display: flex;
}
.window-buttons button {
    width: 45px;
    height: 20px;
}
.window-buttons svg {
    width: 12px;
    height: 12px;
    margin: 0 auto;
    fill: none;
    stroke: #111;
}
.menubar {
    flex: none;
    display: flex;
    gap: 15px;
    height: 19px;
    padding-left: 6px;
    background: #fff;
    border-bottom: 1px solid #e6e6e6;
    font-size: 12px;
    line-height: 17px;
    color: #222;
}

/* command line */
.history {
    flex: none;
    display: flex;
    height: 60px;
    background: #fff;
    color: #222;
}
.history-text {
    flex: 1;
    line-height: 21px;
    margin-top: -4px;
}
.scrollbar {
    width: 13px;
    padding: 26px 0 0 3px;
    background: #f0f0f0;
}
.thumb {
    height: 17px;
    background: #858585;
}
.prompt {
    flex: none;
    display: flex;
    height: 18px;
    border-top: 1px solid #ddd;
    background: #fff;
    color: #222;
}
.prompt label {
    font-weight: bold;
    line-height: 16px;
}
.prompt input {
    flex: 1;
    outline: 0;
}
.spinner {
    display: flex;
    flex-direction: column;
    width: 11px;
}
.spinner button {
    flex: 1;
    min-height: 0;
    border: 1px solid #ccc;
    background: #f3f3f3;
    display: grid;
    place-items: center;
}
.spinner button::before {
    content: "";
    border: 2px solid transparent;
    border-top: 0;
    border-bottom: 3px solid #111;
}
.spinner .down::before {
    border-top: 3px solid #111;
    border-bottom: 0;
}

/* toolbars */
.toolbar-tabs {
    flex: none;
    display: flex;
    height: 28px;
    border-bottom: 1px solid #d9dbe0;
    color: #4a4c50;
}
.toolbar-tabs button {
    padding: 2px 14px 0 15px;
}
.toolbar-tabs .active {
    margin-top: 4px;
    padding-top: 0;
    padding-bottom: 2px;
    border-right: 1px solid #d9dbe0;
    background: #eef0f3;
}
.cog {
    width: 13px;
    height: 13px;
    color: #a0a0a0;
}
.toolbar-tabs .cog {
    margin: 9px 0 0 auto;
}
.toolbar {
    display: flex;
    flex-wrap: wrap;
    align-content: flex-start;
}
.toolbar button {
    position: relative;
    width: 28px;
    height: 28px;
    padding: 3px;
}
.toolbar svg {
    width: 22px;
    height: 22px;
}
.toolbar .more::after {
    content: "";
    position: absolute;
    right: 0;
    bottom: 1px;
    border: 3px solid #777;
    border-left-color: transparent;
    border-top-color: transparent;
}
.main-tools {
    flex: none;
    height: 33px;
    margin-left: -1px;
}
.workspace {
    flex: 1;
    min-height: 0;
    display: grid;
    grid-template-columns: 59px 1fr 242px;
    column-gap: 4px;
}
.side-tools {
    margin-right: 3px;
}

/* model view */
.views {
    display: flex;
    flex-direction: column;
    min-width: 0;
    min-height: 0;
    margin-left: -4px;
}
.viewport {
    flex: 1;
    min-height: 0;
    position: relative;
    overflow: hidden;
    background: #9ca3aa;
}
.scene {
    width: 100%;
    height: 100%;
}
.grid {
    fill: none;
    stroke: #747b86;
    stroke-opacity: .3;
}
.model {
    stroke: #111;
    stroke-width: 4;
    stroke-linejoin: round;
}
.model .thin {
    fill: none;
    stroke: #333;
    stroke-width: 2;
}
.axes {
    stroke: #6b7078;
}
.axes text {
    stroke: none;
    fill: #5f646c;
    font-size: 14px;
}
.view-title {
    position: absolute;
    top: 0;
    left: 0;
    display: flex;
    height: 18px;
    padding-left: 5px;
    background: #879eeb;
    color: #222c4d;
    font-size: 12px;
    line-height: 17px;
    font-weight: bold;
}
.view-title button {
    width: 12px;
    margin-left: 4px;
    border-left: 1px solid #5f74bd;
    display: grid;
    place-items: center;
}
.view-title button::before {
    content: "";
    border: 3px solid transparent;
    border-top: 4px solid #222c4d;
    border-bottom: 0;
}
.float {
    position: absolute;
    background: #ebedf1;
    clip-path: polygon(13px 0, 100% 0, 100% 100%, 0 100%, 0 13px);
}
.popup {
    left: 138px;
    top: 61px;
    width: 216px;
    height: 84px;
}
.keyshot {
    right: 1px;
    top: 2px;
    width: 179px;
    height: 59px;
}
.float-head {
    display: flex;
    align-items: center;
    height: 23px;
    background: #879eeb;
}
.float-tab {
    display: flex;
    align-items: center;
    gap: 9px;
    align-self: stretch;
    margin-right: auto;
    padding: 0 15px 0 8px;
    background: #ebedf1;
}
.keyshot .float-tab {
    padding: 0 14px 0 15px;
    font-size: 12px;
}
.float-tab svg {
    width: 15px;
    height: 15px;
}
.float-head .cog {
    color: #d5d5cc;
}
.close {
    width: 18px;
    color: #dfe5fb;
    line-height: 20px;
}
.float .toolbar {
    margin-top: 1px;
}
.view-tabs {
    flex: none;
    display: flex;
    height: 24px;
    font-size: 12px;
    line-height: 20px;
}
.view-tabs button {
    height: 21px;
    padding: 0 7px;
}
.view-tabs .active {
    padding: 0 4px 0 10px;
    margin-right: 4px;
    border: 1px solid #d9dbe0;
    border-top: 0;
    border-left: 0;
    background: #eef0f3;
}
.view-tabs svg {
    width: 10px;
    height: 10px;
    margin-left: 4px;
}

/* properties panel */
.panel {
    overflow: hidden;
    margin-bottom: 4px;
    border-left: 1px solid #d3d6dc;
    border-bottom: 1px solid #d3d6dc;
    background: #ebedf1;
}
.panel-tabs {
    display: grid;
    grid-template-columns: 30px repeat(7, 1fr);
    height: 23px;
    margin-right: -11px;
}
.panel-tabs button {
    padding-top: 3px;
    border-bottom: 1px solid #d3d6dc;
}
.panel-tabs .active {
    border-bottom: 0;
    border-right: 1px solid #d3d6dc;
}
.panel-tabs svg {
    width: 16px;
    height: 16px;
    margin: 0 auto;
}
.panel-tabs .faded {
    color: #d0d2d6;
}
.panel-kinds {
    display: flex;
    gap: 4px;
    padding: 4px 7px 7px;
}
.panel-kinds button {
    width: 28px;
    height: 28px;
    padding: 2px;
}
.panel-kinds .active {
    background: #aebbea;
}
.panel-kinds svg {
    width: 24px;
    height: 24px;
}
.props h2 {
    height: 24px;
    padding-left: 7px;
    font-size: 15px;
    line-height: 24px;
}
.row {
    display: flex;
    align-items: center;
    height: 19px;
    padding-right: 7px;
}
.row label {
    width: 119px;
    padding-left: 25px;
    flex: none;
    line-height: 17px;
    padding-bottom: 2px;
    white-space: nowrap;
}
.row.dim label {
    color: #85878c;
}
.row input[type="text"], .select {
    flex: 1;
    min-width: 0;
    height: 18px;
    padding-left: 2px;
    background: #fff;
    font-size: 12px;
}
.row input.plain {
    background: none;
}
.select {
    display: flex;
    position: relative;
}
.select select {
    flex: 1;
    appearance: none;
    font-size: 13px;
}
.select::after {
    content: "";
    position: absolute;
    right: 7px;
    top: 5px;
    width: 5px;
    height: 5px;
    border: solid #666;
    border-width: 0 1px 1px 0;
    transform: rotate(45deg);
}
.select::before {
    content: "";
    position: absolute;
    right: 0;
    top: 1px;
    width: 18px;
    height: 17px;
    border: 1px solid #ddd;
    border-radius: 2px;
}
.row button {
    flex: 1;
    height: 18px;
    border: 1px solid #dcdde0;
    border-radius: 2px;
    background: #fdfdfd;
    line-height: 14px;
    color: #111;
}
.row.file button {
    flex: 0 0 18px;
}
input[type="checkbox"] {
    appearance: none;
    flex: none;
    width: 13px;
    height: 13px;
    border: 1px solid #8a8a8a;
    border-radius: 3px;
    background: #f6f6f7;
    display: grid;
    place-items: center;
}
input[type="checkbox"]:checked {
    border-color: #005fb8;
    background: #005fb8;
}
input[type="checkbox"]:checked::after {
    content: "";
    width: 6px;
    height: 3px;
    margin-bottom: 2px;
    border: solid #fff;
    border-width: 0 0 1px 1px;
    transform: rotate(-45deg);
}
input.blank {
    border-color: #eee;
    background: #fff;
}
.row input[type="checkbox"] {
    margin-left: 2px;
}

/* bottom bars */
.osnap {
    flex: none;
    display: flex;
    align-items: center;
    gap: 7px;
    height: 24px;
    padding: 0 0 2px 2px;
}
.osnap label {
    display: flex;
    align-items: center;
    gap: 3px;
}
.statusbar {
    flex: none;
    display: flex;
    height: 11px;
    overflow: hidden;
    border-top: 1px solid #d3d6dc;
    line-height: 14px;
    white-space: nowrap;
}
.statusbar button {
    height: 14px;
    padding: 0 5px;
    line-height: 14px;
}
.statusbar .on {
    background: #d0d6ef;
    font-weight: bold;
}
.cell {
    border-right: 1px solid #d3d6dc;
    text-align: center;
}
.plane {
    width: 57px;
}
.coord, .cpu {
    font-size: 12px;
}
.coord {
    width: 84px;
}
.units {
    width: 76px;
}
.layer {
    display: flex;
    gap: 3px;
    width: 173px;
    padding-left: 10px;
    border: 0;
}
.layer i {
    width: 11px;
    height: 11px;
    background: #000;
}
```
FILE: scene.js
```js
// ground plane -> screen, one unit per grid cell
function project(x, y) {
    const w = -0.013308 * x + 0.031474 * y + 1;
    return [
        ((44.283 * x + 50.265 * y + 214) / w).toFixed(1),
        ((0.739 * x - 2.091 * y + 631) / w).toFixed(1)
    ].join(' ');
}

let lines = '';
for (let i = -20; i <= 20; i++) {
    lines += `M${project(i, -20)}L${project(i, 20)}`;
    lines += `M${project(-20, i)}L${project(20, i)}`;
}
document.getElementById('grid').setAttribute('d', lines);
document.getElementById('ground').setAttribute('d',
    `M${project(-20, -20)}L${project(20, -20)}L${project(20, 20)}L${project(-20, 20)}z`);

// wheel isocurves
function onEllipse(spec, t) {
    const [cx, cy, rx, ry, deg] = spec.split(' ').map(Number);
    const a = deg * Math.PI / 180;
    const x = rx * Math.cos(t);
    const y = ry * Math.sin(t);
    return (cx + x * Math.cos(a) - y * Math.sin(a)).toFixed(1) + ' ' +
        (cy + x * Math.sin(a) + y * Math.cos(a)).toFixed(1);
}

document.querySelectorAll('[data-spokes]').forEach(path => {
    const n = Number(path.dataset.spokes);
    let d = '';
    for (let i = 0; i < n; i++) {
        const t = i / n * Math.PI * 2;
        d += `M${onEllipse(path.dataset.inner, t)}L${onEllipse(path.dataset.outer, t)}`;
    }
    path.setAttribute('d', d);
});
```
